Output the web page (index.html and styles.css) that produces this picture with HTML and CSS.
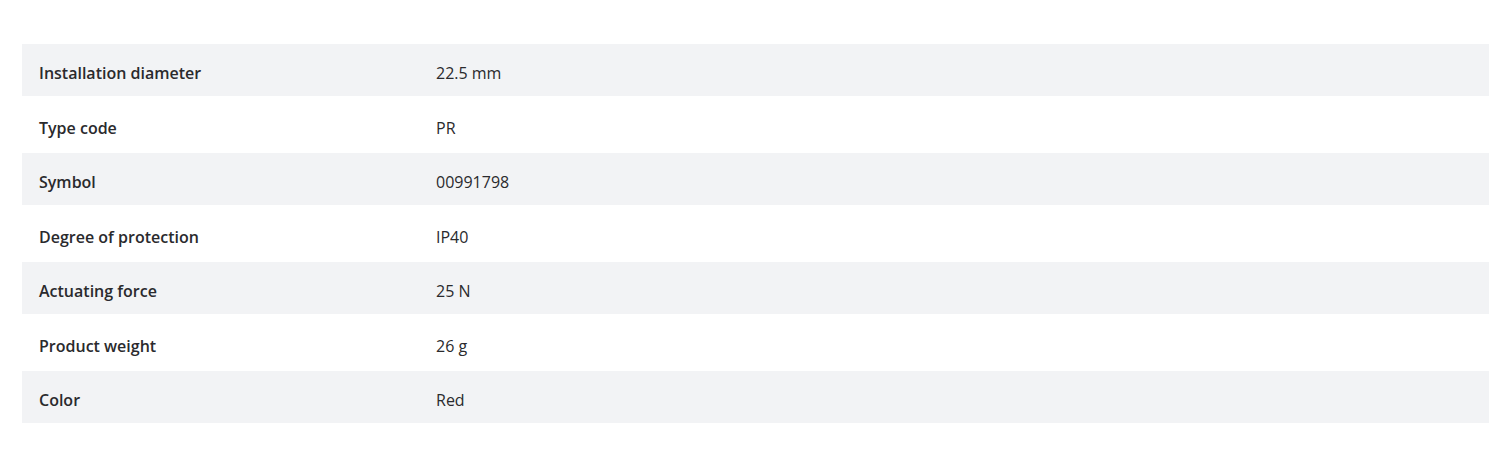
FILE: index.html
```html
<!DOCTYPE html>
<html>
<head>
<meta charset="utf-8">
<link rel="stylesheet" href="styles.css">
</head>
<body>
<div class="page">
  <table class="specs">
    <tr class="odd"><th>Installation diameter</th><td>22.5 mm</td></tr>
    <tr class="even"><th>Type code</th><td>PR</td></tr>
    <tr class="odd"><th>Symbol</th><td>00991798</td></tr>
    <tr class="even"><th>Degree of protection</th><td>IP40</td></tr>
    <tr class="odd"><th>Actuating force</th><td>25 N</td></tr>
    <tr class="even"><th>Product weight</th><td>26 g</td></tr>
    <tr class="odd"><th>Color</th><td>Red</td></tr>
  </table>
</div>
</body>
</html>
```
FILE: styles.css
```css
html, body {
  margin: 0;
  padding: 0;
  background: #ffffff;
}
.page {
  padding: 44px 11px 0 22px;
}
.specs {
  width: 100%;
  border-collapse: collapse;
  font-family: "Open Sans", "Noto Sans", sans-serif;
  font-size: 16px;
  color: #2a2a2d;
}
.specs tr.odd {
  background: #f2f3f5;
  height: 52px;
}
.specs tr.even {
  background: #ffffff;
  height: 57px;
}
.specs th {
  text-align: left;
  font-weight: 600;
  width: 397px;
  padding: 6px 0 0 17px;
  vertical-align: middle;
}
.specs td {
  padding: 6px 0 0 0;
  vertical-align: middle;
  font-weight: 400;
}
```
